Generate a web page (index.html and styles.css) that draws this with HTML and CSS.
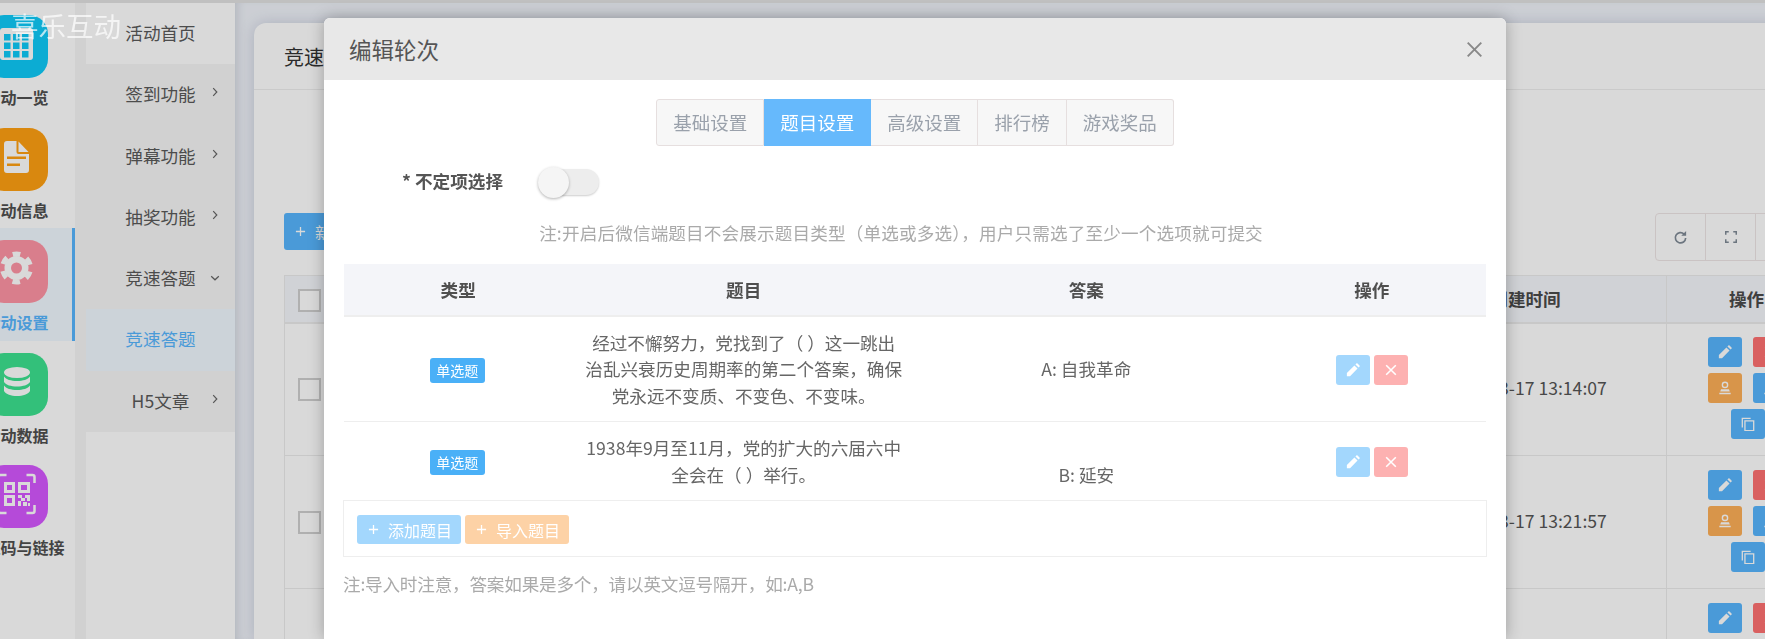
FILE: index.html
```html
<!DOCTYPE html>
<html lang="zh-CN">
<head>
    <meta charset="UTF-8">
    <meta name="viewport" content="width=device-width, initial-scale=1.0">
    <title>编辑轮次</title>
    <link rel="stylesheet" href="styles.css">
</head>
<body>
    <svg class="sprite" aria-hidden="true">
        <symbol id="i-pencil" viewBox="0 0 16 16"><path d="M1 15v-3.6L9.6 2.8l3.6 3.6L4.6 15zM10.8 1.6l1-1a1 1 0 0 1 1.4 0l2.2 2.2a1 1 0 0 1 0 1.4l-1 1z"/></symbol>
        <symbol id="i-close" viewBox="0 0 16 16"><path d="M2.5 2.5l11 11M13.5 2.5l-11 11" fill="none" stroke="currentColor" stroke-width="1.8"/></symbol>
        <symbol id="i-plus" viewBox="0 0 12 12"><path d="M6 1v10M1 6h10" fill="none" stroke="currentColor" stroke-width="1.4"/></symbol>
        <symbol id="i-user" viewBox="0 0 16 16"><circle cx="8" cy="4.5" r="3" fill="none" stroke="currentColor" stroke-width="1.6"/><path d="M3.5 9.5h9l1 2.5h-11zM1.5 13.5h13v1.5h-13z"/></symbol>
        <symbol id="i-copy" viewBox="0 0 16 16"><path d="M1.5 12V1.5H11M4.5 4.5h10v11h-10z" fill="none" stroke="currentColor" stroke-width="1.5"/></symbol>
        <symbol id="i-right" viewBox="0 0 6 10"><path d="M1.2 1.2L4.8 5 1.2 8.8" fill="none" stroke="currentColor" stroke-width="1.2"/></symbol>
        <symbol id="i-down" viewBox="0 0 10 6"><path d="M1.2 1.2L5 4.8l3.8-3.6" fill="none" stroke="currentColor" stroke-width="1.2"/></symbol>
    </svg>

    <div class="topline"></div>

    <div class="layout">
        <aside class="apps">
            <a class="app">
                <span class="app-icon app-cyan">
                    <svg viewBox="0 0 63 63">
                        <path class="glyph" d="M18 13h27a3 3 0 0 1 3 3v26a3 3 0 0 1-3 3H18a3 3 0 0 1-3-3V16a3 3 0 0 1 3-3z"/>
                        <g class="cut">
                            <rect x="19" y="19" width="6.5" height="6.5"/><rect x="28" y="19" width="6.5" height="6.5"/><rect x="37" y="19" width="6.5" height="6.5"/>
                            <rect x="19" y="27.5" width="6.5" height="6.5"/><rect x="28" y="27.5" width="6.5" height="6.5"/><rect x="37" y="27.5" width="6.5" height="6.5"/>
                            <rect x="19" y="36" width="6.5" height="6.5"/><rect x="28" y="36" width="6.5" height="6.5"/><rect x="37" y="36" width="6.5" height="6.5"/>
                        </g>
                    </svg>
                </span>
                <span class="app-name">活动一览</span>
            </a>
            <a class="app">
                <span class="app-icon app-orange">
                    <svg viewBox="0 0 63 63">
                        <path class="glyph" d="M22 13h9.5v11a2 2 0 0 0 2 2H44v16a3 3 0 0 1-3 3H22a3 3 0 0 1-3-3V16a3 3 0 0 1 3-3z"/>
                        <path class="glyph" d="M33.500 13.500L43.500 24H33.500z"/>
                        <path class="cut" d="M22 28.500h19v2.500H22zM22 35.500h13v2.500H22z"/>
                    </svg>
                </span>
                <span class="app-name">活动信息</span>
            </a>
            <a class="app active">
                <span class="app-icon app-pink">
                    <svg viewBox="0 0 63 63">
                        <circle class="glyph" cx="31.500" cy="28" r="12"/>
                        <circle class="gear-teeth" cx="31.500" cy="28" r="14" transform="rotate(-105.300 31.500 28)"/>
                        <circle class="cut" cx="31.500" cy="28" r="5.500"/>
                    </svg>
                </span>
                <span class="app-name">活动设置</span>
            </a>
            <a class="app">
                <span class="app-icon app-green">
                    <svg viewBox="0 0 63 63">
                        <ellipse class="glyph" cx="32" cy="19.500" rx="13" ry="5.500"/>
                        <path class="glyph" d="M19 23.500c2 3 7 4.500 13 4.500s11-1.500 13-4.500V29c-2 3-7 4.500-13 4.500S21 32 19 29z"/>
                        <path class="glyph" d="M19 32.500c2 3 7 4.500 13 4.500s11-1.500 13-4.500V38c-2 3.500-7 5-13 5s-11-1.500-13-5z"/>
                    </svg>
                </span>
                <span class="app-name">活动数据</span>
            </a>
            <a class="app">
                <span class="app-icon app-purple">
                    <svg viewBox="0 0 63 63">
                        <path class="qr-frame" d="M13.500 18v-6a2 2 0 0 1 2-2h6M41.500 10h6a2 2 0 0 1 2 2v6M13.500 40v6a2 2 0 0 0 2 2h6M41.500 48h6a2 2 0 0 0 2-2v-6"/>
                        <path class="glyph" fill-rule="evenodd" d="M19 17h11v11H19zM22 20v5h5v-5zM33 17h12v11H33zM36 20v5h6v-5zM19 30h11v11H19zM22 33v5h5v-5z"/>
                        <path class="glyph" d="M33 30h4v3h-4zM40 30h5v3h-5zM36 33h4v3h-4zM42 33h3v3h-3zM33 36h3v5h-3zM38 37h4v4h-4zM43 38h2v3h-2z"/>
                    </svg>
                </span>
                <span class="app-name">二维码与链接</span>
            </a>
        </aside>

        <nav class="subnav">
            <ul>
                <li class="plain"><a>活动首页</a></li>
                <li><a>签到功能</a><svg class="arrow"><use href="#i-right"/></svg></li>
                <li><a>弹幕功能</a><svg class="arrow"><use href="#i-right"/></svg></li>
                <li><a>抽奖功能</a><svg class="arrow"><use href="#i-right"/></svg></li>
                <li><a>竞速答题</a><svg class="arrow arrow-down"><use href="#i-down"/></svg></li>
                <li class="current"><a>竞速答题</a></li>
                <li><a>H5文章</a><svg class="arrow"><use href="#i-right"/></svg></li>
            </ul>
        </nav>

        <main class="main">
            <section class="card">
                <div class="card-title">竞速答题</div>
                <div class="card-body">
                    <div class="toolbar">
                        <button class="btn-new"><svg class="ico-plus"><use href="#i-plus"/></svg>新增</button>
                        <div class="tools">
                            <span class="tool">
                                <svg viewBox="0 0 16 16" class="ico-tool"><path d="M13.500 8.500a5.500 5.500 0 1 1-1.700-4.200" fill="none" stroke="currentColor" stroke-width="1.800"/><path d="M14 1v5.200H8.800z"/></svg>
                            </span>
                            <span class="tool">
                                <svg viewBox="0 0 16 16" class="ico-tool ico-small"><path d="M1 5V1h4M11 1h4v4M1 11v4h4M11 15h4v-4" fill="none" stroke="currentColor" stroke-width="2"/></svg>
                            </span>
                            <span class="tool tool-wide"></span>
                        </div>
                    </div>
                    <table class="grid">
                        <thead>
                            <tr>
                                <th class="col-check"><span class="checkbox"></span></th>
                                <th></th>
                                <th class="col-time">创建时间</th>
                                <th class="col-ops">操作</th>
                            </tr>
                        </thead>
                        <tbody>
                            <tr>
                                <td><span class="checkbox"></span></td>
                                <td></td>
                                <td>2023-03-17 13:14:07</td>
                                <td>
                                    <div class="ops">
                                        <span class="op op-blue"><svg><use href="#i-pencil"/></svg></span>
                                        <span class="op op-red"><svg><use href="#i-close"/></svg></span>
                                        <span class="op op-orange"><svg><use href="#i-user"/></svg></span>
                                        <span class="op op-blue"><svg><use href="#i-user"/></svg></span>
                                        <span class="op op-blue"><svg><use href="#i-copy"/></svg></span>
                                    </div>
                                </td>
                            </tr>
                            <tr>
                                <td><span class="checkbox"></span></td>
                                <td></td>
                                <td>2023-03-17 13:21:57</td>
                                <td>
                                    <div class="ops">
                                        <span class="op op-blue"><svg><use href="#i-pencil"/></svg></span>
                                        <span class="op op-red"><svg><use href="#i-close"/></svg></span>
                                        <span class="op op-orange"><svg><use href="#i-user"/></svg></span>
                                        <span class="op op-blue"><svg><use href="#i-user"/></svg></span>
                                        <span class="op op-blue"><svg><use href="#i-copy"/></svg></span>
                                    </div>
                                </td>
                            </tr>
                            <tr>
                                <td><span class="checkbox"></span></td>
                                <td></td>
                                <td></td>
                                <td>
                                    <div class="ops">
                                        <span class="op op-blue"><svg><use href="#i-pencil"/></svg></span>
                                        <span class="op op-red"><svg><use href="#i-close"/></svg></span>
                                        <span class="op op-orange"><svg><use href="#i-user"/></svg></span>
                                        <span class="op op-blue"><svg><use href="#i-user"/></svg></span>
                                        <span class="op op-blue"><svg><use href="#i-copy"/></svg></span>
                                    </div>
                                </td>
                            </tr>
                        </tbody>
                    </table>
                </div>
            </section>
        </main>
    </div>

    <div class="mask"></div>
    <div class="brand">喜乐互动</div>

    <div class="modal">
        <div class="modal-head">
            <h2>编辑轮次</h2>
            <svg class="modal-close" viewBox="0 0 15 15"><path d="M.7.7l13.600 13.600M14.300.7L.7 14.300" fill="none" stroke="currentColor" stroke-width="1.900"/></svg>
        </div>
        <div class="modal-body">
            <div class="tabs">
                <span class="tab">基础设置</span>
                <span class="tab on">题目设置</span>
                <span class="tab">高级设置</span>
                <span class="tab">排行榜</span>
                <span class="tab">游戏奖品</span>
            </div>

            <div class="field">
                <label>* 不定项选择</label>
                <span class="switch"></span>
            </div>

            <p class="tip tip-center">注:开启后微信端题目不会展示题目类型（单选或多选），用户只需选了至少一个选项就可提交</p>

            <table class="questions">
                <thead>
                    <tr>
                        <th class="q-type">类型</th>
                        <th class="q-text">题目</th>
                        <th class="q-answer">答案</th>
                        <th class="q-ops">操作</th>
                    </tr>
                </thead>
                <tbody>
                    <tr>
                        <td class="cell-type"><span class="badge">单选题</span></td>
                        <td>经过不懈努力，党找到了（ ）这一跳出<br>治乱兴衰历史周期率的第二个答案，确保<br>党永远不变质、不变色、不变味。</td>
                        <td>A: 自我革命</td>
                        <td>
                            <div class="row-ops">
                                <span class="op op-light-blue"><svg><use href="#i-pencil"/></svg></span>
                                <span class="op op-light-red"><svg><use href="#i-close"/></svg></span>
                            </div>
                        </td>
                    </tr>
                    <tr>
                        <td class="cell-type"><span class="badge">单选题</span></td>
                        <td>1938年9月至11月，党的扩大的六届六中<br>全会在（ ）举行。</td>
                        <td><br>B: 延安</td>
                        <td>
                            <div class="row-ops">
                                <span class="op op-light-blue"><svg><use href="#i-pencil"/></svg></span>
                                <span class="op op-light-red"><svg><use href="#i-close"/></svg></span>
                            </div>
                        </td>
                    </tr>
                </tbody>
            </table>

            <div class="actions">
                <button class="btn-soft btn-soft-blue"><svg class="ico-plus"><use href="#i-plus"/></svg>添加题目</button>
                <button class="btn-soft btn-soft-orange"><svg class="ico-plus"><use href="#i-plus"/></svg>导入题目</button>
            </div>

            <p class="tip tip-import">注:导入时注意，答案如果是多个，请以英文逗号隔开，如:A,B</p>
        </div>
    </div>
</body>
</html>
```

FILE: styles.css
```css
* {
    box-sizing: border-box;
}

html, body {
    height: 100%;
    margin: 0;
    padding: 0;
    overflow: hidden;
}

body {
    font-family: "Noto Sans CJK SC", "Noto Sans", sans-serif;
    font-size: 17.6px;
    color: #555;
    background-color: #fff;
}

.sprite {
    position: absolute;
    width: 0;
    height: 0;
}

.topline {
    height: 3px;
    background-color: #e2e2e2;
}

.layout {
    display: flex;
    height: calc(100vh - 3px);
}

/* left app column, part of it is scrolled out of the window */
.apps {
    flex: none;
    width: 117px;
    margin-left: -42px;
    background-color: #fff;
}

.app {
    display: flex;
    flex-direction: column;
    align-items: center;
    height: 112.5px;
    padding-top: 12px;
    color: #4f4f4f;
}

.app.active {
    background-color: #f0f8ff;
    border-right: 3px solid #57b6fe;
    color: #57b6fe;
    padding-left: 3px;
}

.app-icon {
    display: block;
    width: 63px;
    height: 63px;
    border-radius: 19px;
}

.app-icon svg {
    display: block;
    width: 63px;
    height: 63px;
}

.app-name {
    margin-top: 7px;
    font-size: 16px;
    font-weight: 700;
    line-height: 24px;
    white-space: nowrap;
}

.glyph {
    fill: #fff;
}

.app-cyan { background-color: #0fcbf8; }
.app-orange { background-color: #ffa012; }
.app-pink { background-color: #ff95a5; }
.app-green { background-color: #3ce290; }
.app-purple { background-color: #d558ff; }

.app-cyan .cut { fill: #0fcbf8; }
.app-orange .cut { fill: #ffa012; }
.app-pink .cut { fill: #ff95a5; }

.gear-teeth {
    fill: none;
    stroke: #fff;
    stroke-width: 5;
    stroke-dasharray: 7.5 7.16;
}

.qr-frame {
    fill: none;
    stroke: #fff;
    stroke-width: 2.5;
}

.subnav {
    flex: none;
    width: 160px;
    padding-left: 11px;
    background-color: #f6f6f6;
    position: relative;
}

.subnav ul {
    list-style-type: none;
    margin: 0;
    padding: 0;
    height: 100%;
    background-color: #fff;
}

.subnav li {
    position: relative;
    height: 61.3px;
    line-height: 59px;
    text-align: center;
    color: #5a5a5a;
    background-color: #f6f6f6;
}

.subnav li.plain {
    background-color: #fff;
}

.subnav li.current {
    background-color: #f0f8ff;
    color: #57b6fe;
}

.arrow {
    position: absolute;
    right: 17px;
    top: 23px;
    width: 6px;
    height: 10px;
    color: #666;
}

.arrow-down {
    right: 15px;
    top: 27px;
    width: 10px;
    height: 6px;
}

.main {
    flex: 1;
    min-width: 0;
    padding: 20px 0 0 19px;
    overflow: hidden;
    background-color: #f0f3f9;
    box-shadow: inset 8px 0 10px -6px rgba(60, 70, 100, 0.18);
}

.card {
    width: 1600px;
    height: 100%;
    overflow: hidden;
    background-color: #fff;
    border-radius: 12px 12px 0 0;
    box-shadow: 0 0 14px rgba(90, 105, 150, 0.25);
}

.card-title {
    height: 67px;
    padding-left: 30px;
    line-height: 67px;
    font-size: 20px;
    color: #333;
    border-bottom: 1px solid #eee;
}

.card-body {
    padding: 123px 0 0 30px;
}

.toolbar {
    display: flex;
    justify-content: space-between;
    align-items: flex-start;
    width: 1545px;
}

.btn-new {
    display: flex;
    align-items: center;
    height: 37px;
    width: 110px;
    padding: 0 11px;
    background-color: #57b6fe;
    color: #fff;
    font-family: inherit;
    font-size: 16px;
    border: none;
    border-radius: 3px;
}

.ico-plus {
    flex: none;
    width: 11px;
    height: 11px;
    margin-right: 9px;
}

.tools {
    display: flex;
    height: 48px;
    border: 1px solid #eee5e5;
    border-radius: 4px;
}

.tool {
    display: flex;
    align-items: center;
    justify-content: center;
    width: 50px;
    color: #7f8a96;
    border-right: 1px solid #eee5e5;
}

.tool-wide {
    width: 72px;
    border-right: none;
}

.ico-tool {
    width: 15px;
    height: 15px;
    fill: currentColor;
}

.ico-small {
    width: 12px;
    height: 12px;
}

.grid {
    width: 1543px;
    margin-top: 14px;
    table-layout: fixed;
    border-collapse: collapse;
}

.grid th {
    height: 47px;
    background-color: #f5f7fc;
    font-weight: 700;
    color: #4a4a4a;
    border: 1px solid #ececec;
    border-bottom-width: 2px;
}

.grid td {
    height: 133px;
    padding: 0 0 3px;
    text-align: center;
    color: #555;
    border: 1px solid #ececec;
}

.col-check {
    width: 49px;
}

.col-time {
    width: 282px;
}

.col-ops {
    width: 160px;
}

.checkbox {
    display: inline-block;
    width: 23px;
    height: 23px;
    vertical-align: middle;
    background-color: #fff;
    border: 2px solid #cfcfcf;
}

.ops {
    display: flex;
    flex-wrap: wrap;
    justify-content: center;
    gap: 6px 11px;
    width: 90px;
    margin: 0 auto;
    transform: translateX(1px);
}

.op {
    display: flex;
    align-items: center;
    justify-content: center;
    width: 34px;
    height: 30px;
    border-radius: 3px;
    color: #fff;
    fill: #fff;
}

.op svg {
    width: 14px;
    height: 14px;
}

.op-blue { background-color: #57b6fe; }
.op-red { background-color: #ff7171; }
.op-orange { background-color: #feaf57; }
.op-light-blue { background-color: #a3d7fd; }
.op-light-red { background-color: #fdb1b1; }

.mask {
    position: fixed;
    top: 0;
    left: 0;
    right: 0;
    bottom: 0;
    background-color: rgba(0, 0, 0, 0.15);
}

.brand {
    position: absolute;
    top: 6px;
    left: 11px;
    font-size: 27.5px;
    line-height: 38px;
    color: rgba(255, 255, 255, 0.7);
}

.modal {
    position: absolute;
    top: 18px;
    left: 324px;
    bottom: 0;
    width: 1182px;
    overflow: visible;
    background-color: #fff;
    border-radius: 6px 6px 0 0;
    box-shadow: 0 0 16px rgba(0, 0, 0, 0.28);
}

.modal-head {
    display: flex;
    align-items: center;
    justify-content: space-between;
    height: 62px;
    padding: 0 24px 0 25px;
    background-color: #e8e8e8;
    border-radius: 6px 6px 0 0;
}

.modal-head h2 {
    margin: 0;
    font-size: 22.5px;
    font-weight: 400;
    color: #555;
}

.modal-close {
    width: 15px;
    height: 15px;
    color: #888;
}

.modal-body {
    padding: 19px 20px 0;
}

.tabs {
    display: flex;
    justify-content: center;
}

.tab {
    height: 47px;
    padding: 0 16px;
    font-size: 18.5px;
    line-height: 45px;
    color: #9aa1ab;
    background-color: #f7f7f7;
    border: 1px solid #e6dfdf;
    border-left: none;
}

.tab:first-child {
    border-left: 1px solid #e6dfdf;
    border-radius: 3px 0 0 3px;
}

.tab:last-child {
    border-radius: 0 3px 3px 0;
}

.tab.on {
    color: #fff;
    background-color: #66b9fc;
    border-color: #66b9fc;
}

.field {
    display: flex;
    align-items: center;
    margin-top: 21px;
    height: 30px;
}

.field label {
    width: 159px;
    margin-right: 35px;
    padding-bottom: 4px;
    text-align: right;
    font-size: 17.6px;
    font-weight: 700;
    color: #555;
}

.switch {
    position: relative;
    width: 60px;
    height: 26px;
    margin-left: 1px;
    background-color: #ededed;
    border-radius: 13px;
    box-shadow: 0 1px 2px rgba(0, 0, 0, 0.2);
}

.switch::before {
    content: "";
    position: absolute;
    top: -2px;
    left: -1px;
    width: 31px;
    height: 31px;
    background-color: #f5f5f5;
    border-radius: 50%;
    box-shadow: 0 1px 3px rgba(0, 0, 0, 0.3);
}

.tip {
    margin: 14px 0 0;
    line-height: 26px;
    color: #aaa;
}

.tip-center {
    margin-top: 23px;
    padding-right: 28px;
    text-align: center;
    letter-spacing: 0.15px;
}

.tip-import {
    margin-left: -1px;
    letter-spacing: -0.2px;
}

.questions {
    width: 100%;
    margin-top: 18px;
    table-layout: fixed;
    border-collapse: collapse;
}

.questions th {
    height: 52px;
    font-weight: 700;
    color: #4f4f4f;
    background-color: #f4f5f9;
    border-bottom: 2px solid #eee;
}

.questions td {
    padding: 13px 0 12px;
    line-height: 26.4px;
    text-align: center;
    color: #666;
    border-bottom: 1px solid #eee;
}

.questions tr:last-child td {
    border-bottom: none;
}

.questions td.cell-type {
    padding-right: 2px;
}

.q-type { width: 20%; }
.q-text { width: 30%; }
.q-answer { width: 30%; }
.q-ops { width: 20%; }

.badge {
    display: inline-block;
    height: 25px;
    padding: 0 6.5px;
    font-size: 14px;
    line-height: 25px;
    color: #fff;
    background-color: #4ab0f7;
    border-radius: 3px;
    vertical-align: middle;
}

.row-ops {
    display: flex;
    justify-content: center;
    gap: 4px;
}

.actions {
    display: flex;
    gap: 4px;
    height: 57px;
    margin: 0 -1px;
    padding: 14px 13px;
    border: 1px solid #eee;
}

.btn-soft {
    display: flex;
    align-items: center;
    height: 29px;
    padding: 0 9px 0 11px;
    font-family: inherit;
    font-size: 16px;
    color: #fff;
    border: none;
    border-radius: 3px;
}

.btn-soft-blue { background-color: #a3d7fd; }
.btn-soft-orange { background-color: #fdd2a6; }
```
